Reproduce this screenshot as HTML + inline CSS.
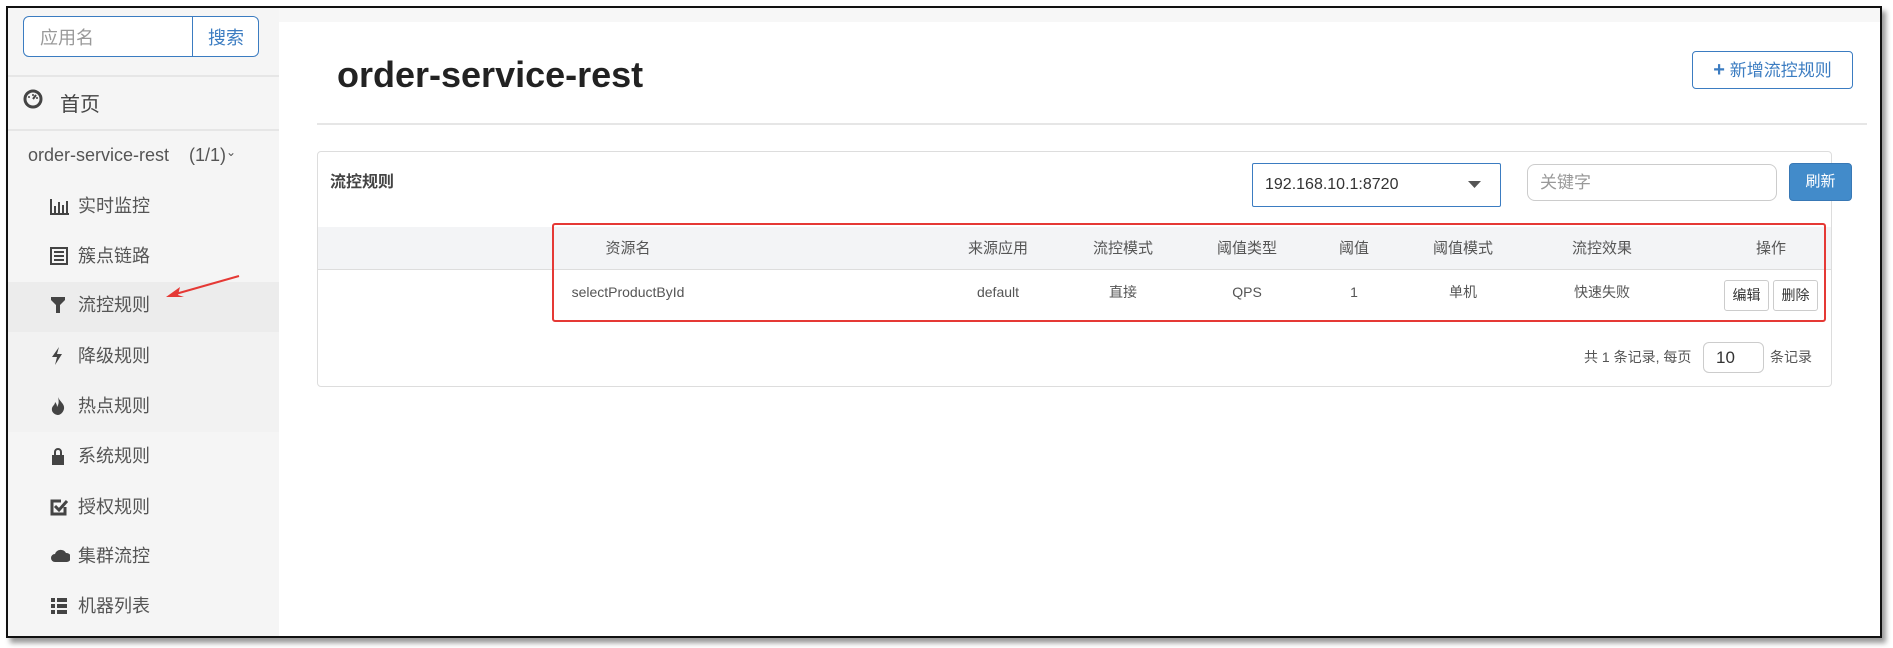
<!DOCTYPE html>
<html><head><meta charset="utf-8"><style>
*{box-sizing:border-box;margin:0;padding:0}
body{width:1893px;height:648px;background:#fff;font-family:"Liberation Sans","Noto Sans CJK SC",sans-serif;position:relative;overflow:hidden;color:#333}
.a{position:absolute;white-space:nowrap}
.frame{left:6px;top:6px;width:1876px;height:632px;border:2px solid #111;box-shadow:4px 5px 5px #999;overflow:hidden;background:#fff}
.side{left:0;top:0;width:271px;height:630px;background:#f5f5f5}
.mi{left:0;width:271px;height:50px;font-size:18px;color:#555;line-height:50px;overflow:hidden}
.mi svg{position:absolute;left:42px;top:16px}
.mi .t{position:absolute;left:70px;top:0;height:50px}
.th{top:227px;height:43px;line-height:43px;font-size:15px;color:#555;transform:translateX(-50%)}
.td{top:270px;height:44px;line-height:44px;font-size:14px;color:#555;transform:translateX(-50%)}
</style></head><body>
<div class="a frame">
 <div class="a side"></div>
 <div class="a" style="left:271px;top:0;width:1610px;height:14px;background:#f7f7f7"></div>
 <div class="a" style="left:15px;top:8px;width:236px;height:41px;border:1px solid #3b7cc1;border-radius:6px;background:#fff"></div>
 <div class="a" style="left:184px;top:8px;width:1px;height:41px;background:#3b7cc1"></div>
 <div class="a" style="left:32px;top:16px;font-size:18px;color:#999">应用名</div>
 <div class="a" style="left:200px;top:16px;font-size:18px;color:#3b7cc1">搜索</div>
 <div class="a" style="left:0;top:67px;width:271px;height:2px;background:#e6e6e6"></div>
 <svg class="a" style="left:15px;top:81px" width="20" height="20" viewBox="0 0 20 20"><circle cx="10" cy="10" r="8" fill="none" stroke="#444" stroke-width="3"/><path d="M10 10l3-4" stroke="#444" stroke-width="2"/><circle cx="6" cy="8" r="1" fill="#444"/><circle cx="10" cy="6" r="1" fill="#444"/><circle cx="14" cy="9" r="1" fill="#444"/></svg>
 <div class="a" style="left:52px;top:80px;font-size:20px;color:#444">首页</div>
 <div class="a" style="left:0;top:121px;width:271px;height:2px;background:#e6e6e6"></div>
 <div class="a" style="left:20px;top:137px;font-size:18px;color:#555">order-service-rest &nbsp;&nbsp;&nbsp;(1/1)<span style="font-size:12px;vertical-align:top">&#8964;</span></div>
 <div class="a" style="left:0;top:274px;width:271px;height:50px;background:#ececec"></div>
 <div class="a" style="left:0;top:324px;width:271px;height:100px;background:#f2f2f2"></div>
 <div class="a mi" style="top:173px"><svg width="20" height="18" viewBox="0 0 20 18"><path d="M1 2v15h18" fill="none" stroke="#444" stroke-width="2"/><rect x="4" y="9" width="2" height="7" fill="#444"/><rect x="8" y="5" width="2" height="11" fill="#444"/><rect x="12" y="8" width="2" height="8" fill="#444"/><rect x="16" y="4" width="2" height="12" fill="#444"/></svg><span class="t">实时监控</span></div>
 <div class="a mi" style="top:223px"><svg width="18" height="18" viewBox="0 0 18 18"><rect x="1" y="1" width="16" height="16" fill="none" stroke="#444" stroke-width="2"/><path d="M4 5h10M4 9h10M4 13h10" stroke="#444" stroke-width="2"/></svg><span class="t">簇点链路</span></div>
 <div class="a mi" style="top:272px"><svg width="16" height="18" viewBox="0 0 16 18"><path d="M1 1h14v3L10 9v8H6V9L1 4z" fill="#444"/></svg><span class="t">流控规则</span></div>
 <div class="a mi" style="top:323px"><svg width="14" height="18" viewBox="0 0 14 18"><path d="M9 0L2 10h5l-2 8 7-11H7z" fill="#444"/></svg><span class="t">降级规则</span></div>
 <div class="a mi" style="top:373px"><svg width="16" height="18" viewBox="0 0 14 18"><path d="M7 0C9 5 14 7 13 12c-1 4-4 6-6 6S0 16 1 11c1-3 3-3 3-6 2 2 2 4 2 5 2-3 2-6 1-10z" fill="#444"/></svg><span class="t">热点规则</span></div>
 <div class="a mi" style="top:423px"><svg width="16" height="18" viewBox="0 0 16 18"><path d="M4 8V5a4 4 0 018 0v3h2v10H2V8zM6 8h4V5a2 2 0 00-4 0z" fill="#444" fill-rule="evenodd"/></svg><span class="t">系统规则</span></div>
 <div class="a mi" style="top:474px"><svg width="18" height="18" viewBox="0 0 18 18"><path d="M15 9v7H2V3h9" fill="none" stroke="#444" stroke-width="3"/><path d="M5 8l4 4 8-9" fill="none" stroke="#444" stroke-width="3"/></svg><span class="t">授权规则</span></div>
 <div class="a mi" style="top:523px"><svg width="20" height="16" viewBox="0 0 20 16"><path d="M5 15a4 4 0 010-8 6 6 0 0111-1 4.5 4.5 0 011 9z" fill="#444"/></svg><span class="t">集群流控</span></div>
 <div class="a mi" style="top:573px"><svg width="18" height="18" viewBox="0 0 18 18"><path d="M1 1h4v4H1zM7 1h10v4H7zM1 7h4v4H1zM7 7h10v4H7zM1 13h4v4H1zM7 13h10v4H7z" fill="#444"/></svg><span class="t">机器列表</span></div>
 <svg class="a" style="left:150px;top:260px" width="90" height="40"><line x1="81" y1="8" x2="14" y2="27" stroke="#e53935" stroke-width="2"/><path d="M8 29l14-10-2 8 6 2z" fill="#e53935"/></svg>
 <div class="a" style="left:329px;top:46px;font-size:36px;font-weight:bold;color:#222">order-service-rest</div>
 <div class="a" style="left:1684px;top:43px;width:161px;height:38px;border:1px solid #3b7cc1;border-radius:4px;color:#3b7cc1;font-size:17px;line-height:36px;text-align:center"><b style="font-size:20px">+</b> 新增流控规则</div>
 <div class="a" style="left:309px;top:115px;width:1550px;height:2px;background:#e6e6e6"></div>
 <div class="a" style="left:309px;top:143px;width:1515px;height:236px;border:1px solid #ddd;border-radius:4px"></div>
 <div class="a" style="left:322px;top:160px;font-size:16px;font-weight:bold;color:#444">流控规则</div>
 <div class="a" style="left:1244px;top:155px;width:249px;height:44px;border:1px solid #3b7cc1;border-radius:2px;font-size:16px;line-height:42px;padding-left:12px;color:#333">192.168.10.1:8720</div>
 <svg class="a" style="left:1460px;top:172px" width="14" height="10"><path d="M0 1h13L6.5 8z" fill="#555"/></svg>
 <div class="a" style="left:1519px;top:156px;width:250px;height:37px;border:1px solid #ccc;border-radius:8px;font-size:17px;line-height:35px;padding-left:12px;color:#999">关键字</div>
 <div class="a" style="left:1781px;top:155px;width:63px;height:38px;background:#428bca;border:1px solid #3878b5;border-radius:4px;color:#fff;font-size:15px;line-height:36px;text-align:center">刷新</div>
 <div class="a" style="left:310px;top:219px;width:1513px;height:43px;background:#f3f4f6;border-bottom:1px solid #ddd"></div>
 <div class="a th" style="left:620px;top:219px">资源名</div>
 <div class="a th" style="left:990px;top:219px">来源应用</div>
 <div class="a th" style="left:1115px;top:219px">流控模式</div>
 <div class="a th" style="left:1239px;top:219px">阈值类型</div>
 <div class="a th" style="left:1346px;top:219px">阈值</div>
 <div class="a th" style="left:1455px;top:219px">阈值模式</div>
 <div class="a th" style="left:1594px;top:219px">流控效果</div>
 <div class="a th" style="left:1763px;top:219px">操作</div>
 <div class="a td" style="left:620px;top:262px">selectProductById</div>
 <div class="a td" style="left:990px;top:262px">default</div>
 <div class="a td" style="left:1115px;top:262px">直接</div>
 <div class="a td" style="left:1239px;top:262px">QPS</div>
 <div class="a td" style="left:1346px;top:262px">1</div>
 <div class="a td" style="left:1455px;top:262px">单机</div>
 <div class="a td" style="left:1594px;top:262px">快速失败</div>
 <div class="a" style="left:1716px;top:272px;width:45px;height:31px;border:1px solid #ccc;border-radius:3px;font-size:14px;line-height:29px;text-align:center;color:#333">编辑</div>
 <div class="a" style="left:1765px;top:272px;width:45px;height:31px;border:1px solid #ccc;border-radius:3px;font-size:14px;line-height:29px;text-align:center;color:#333">删除</div>
 <div class="a" style="left:544px;top:215px;width:1274px;height:99px;border:2px solid #e53935;border-radius:3px"></div>
 <div class="a" style="left:1576px;top:339px;font-size:14px;color:#555">共 1 条记录, 每页</div>
 <div class="a" style="left:1695px;top:334px;width:61px;height:31px;border:1px solid #ccc;border-radius:6px;font-size:17px;line-height:29px;padding-left:12px;color:#333">10</div>
 <div class="a" style="left:1762px;top:339px;font-size:14px;color:#555">条记录</div>
</div>
</body></html>
